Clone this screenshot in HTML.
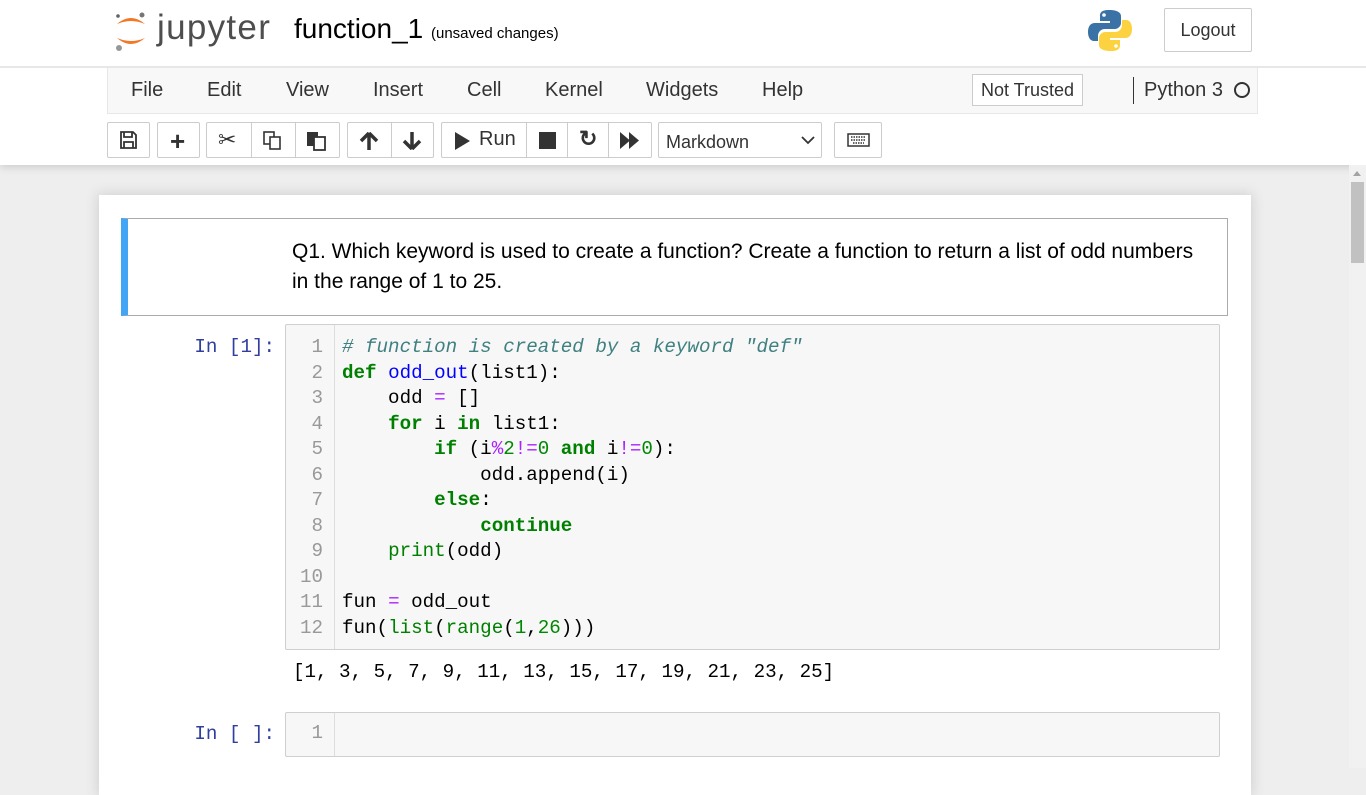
<!DOCTYPE html><html><head><style>
*{box-sizing:border-box;margin:0;padding:0}
body{width:1366px;height:768px;overflow:hidden;background:#eee;font-family:"Liberation Sans",sans-serif;position:relative}
.abs{position:absolute}
#hdr{left:0;top:0;width:1366px;height:165px;background:#fff;box-shadow:0 2px 8px rgba(0,0,0,.15);z-index:2}
.menu{left:107px;top:68px;width:1151px;height:46px;background:#f8f8f8;border:1px solid #e7e7e7;border-top:none}
.mi{position:absolute;top:11px;font-size:20px;color:#333}
.btn{position:absolute;top:122px;height:36px;border:1px solid #ccc;border-radius:2px;background:#fff}
.sep{position:absolute;top:0;width:1px;height:34px;background:#ccc}
.ic{position:absolute;top:8px;font-size:18px;color:#333}
.mono{font-family:"Liberation Mono",monospace;font-size:19.2px}
.ln{position:absolute;right:0;width:38px;text-align:right;color:#999}
.k{color:#008000;font-weight:bold}.o{color:#aa22ff}.n{color:#080}.c{color:#408080;font-style:italic}.f{color:#00f}.b{color:#008000}
</style></head><body>
<div id="hdr" class="abs">
 <svg class="abs" style="left:113px;top:10px" width="36" height="42" viewBox="0 0 36 42">
  <path d="M4 14 Q18 2 32 14 Q18 8 4 14Z" fill="#f37726"/>
  <path d="M4 28 Q18 40 32 28 Q18 34 4 28Z" fill="#f37726"/>
  <circle cx="29" cy="5" r="2.5" fill="#767677"/><circle cx="6" cy="38" r="3" fill="#989798"/><circle cx="5" cy="6" r="1.8" fill="#616262"/>
 </svg>
 <div class="abs" style="left:157px;top:8px;font-size:35px;color:#4e4e4e;letter-spacing:1.3px">jupyter</div>
 <div class="abs" style="left:294px;top:13px;font-size:28px;color:#000">function_1 <span style="font-size:15px">(unsaved changes)</span></div>
 <svg class="abs" style="left:1088px;top:9px" width="44" height="43" viewBox="0 0 44 43">
  <path d="M21 1c-9 0-9 4-9 6v5h10v2H7c-5 0-7 4-7 9s2 9 6 9h4v-5c0-4 3-7 7-7h10c3 0 6-3 6-6V7c0-3-3-6-12-6z" fill="#3a72a5"/>
  <path d="M23 42c9 0 9-4 9-6v-5H22v-2h15c5 0 7-4 7-9s-2-9-6-9h-4v5c0 4-3 7-7 7H17c-3 0-6 3-6 6v7c0 3 3 6 12 6z" fill="#fdd240"/>
  <circle cx="16" cy="6" r="1.8" fill="#fff"/><circle cx="28" cy="37" r="1.8" fill="#fff"/>
 </svg>
 <div class="abs" style="left:1164px;top:8px;width:88px;height:44px;border:1px solid #ccc;border-radius:2px;font-size:18px;color:#333;text-align:center;line-height:42px">Logout</div>
 <div class="abs" style="left:0;top:66px;width:1366px;height:2px;background:#e7e7e7"></div>
 <div class="abs menu">
  <span class="mi" style="left:23px">File</span><span class="mi" style="left:99px">Edit</span><span class="mi" style="left:178px">View</span><span class="mi" style="left:265px">Insert</span><span class="mi" style="left:359px">Cell</span><span class="mi" style="left:437px">Kernel</span><span class="mi" style="left:538px">Widgets</span><span class="mi" style="left:654px">Help</span>
  <div class="abs" style="left:864px;top:6px;width:111px;height:32px;border:1px solid #ccc;background:#fff;font-size:18px;color:#333;text-align:center;line-height:30px">Not Trusted</div>
  <div class="abs" style="left:1025px;top:9px;width:1px;height:27px;background:#333"></div>
  <span class="mi" style="left:1036px">Python 3</span>
  <div class="abs" style="left:1126px;top:14px;width:16px;height:16px;border:2.5px solid #333;border-radius:50%"></div>
 </div>
 <div class="btn" style="left:107px;width:43px"><svg class="abs" style="left:12px;top:8px" width="17" height="18" viewBox="0 0 17 18"><path d="M1 1h12l3 3v13H1z M4 1v5h8V1 M4 11h9v6H4z" fill="none" stroke="#333" stroke-width="1.8"/></svg></div>
 <div class="btn" style="left:157px;width:43px"><span class="ic" style="left:12px;top:3px;font-size:26px;font-weight:bold">+</span></div>
 <div class="btn" style="left:206px;width:134px"><span class="ic" style="left:11px;font-size:22px;top:4px">✂</span><div class="sep" style="left:44px"></div><svg class="abs" style="left:56px;top:8px" width="20" height="20"><rect x="1" y="1" width="10" height="12" fill="#fff" stroke="#333" stroke-width="1.6"/><rect x="7" y="6" width="10" height="12" fill="#fff" stroke="#333" stroke-width="1.6"/></svg><div class="sep" style="left:88px"></div><svg class="abs" style="left:99px;top:8px" width="20" height="20"><rect x="1" y="1" width="11" height="14" fill="#333"/><rect x="8" y="6" width="11" height="13" fill="#fff" stroke="#333" stroke-width="1.8"/></svg></div>
 <div class="btn" style="left:347px;width:87px"><svg class="abs" style="left:11px;top:9px" width="20" height="18"><path d="M10 1L2 9M10 1l8 8M10 2v16" stroke="#333" stroke-width="3.5" fill="none"/></svg><div class="sep" style="left:43px"></div><svg class="abs" style="left:54px;top:9px" width="20" height="18"><path d="M10 17L2 9M10 17l8-8M10 16V0" stroke="#333" stroke-width="3.5" fill="none"/></svg></div>
 <div class="btn" style="left:441px;width:211px"><svg class="abs" style="left:12px;top:9px" width="16" height="18"><path d="M1 0l15 9-15 9z" fill="#333"/></svg><span class="ic" style="left:37px;top:5px;font-size:20px">Run</span><div class="sep" style="left:84px"></div><div class="abs" style="left:97px;top:9px;width:17px;height:17px;background:#333"></div><div class="sep" style="left:125px"></div><span class="ic" style="left:137px;top:3px;font-size:22px;font-weight:bold">↻</span><div class="sep" style="left:166px"></div><svg class="abs" style="left:178px;top:9px" width="20" height="17"><path d="M0 0l10 8.5L0 17zM9 0l10 8.5L9 17z" fill="#333"/></svg></div>
 <div class="btn" style="left:658px;width:164px"><span class="ic" style="left:7px;top:9px;font-size:18px">Markdown</span><svg class="abs" style="left:142px;top:13px" width="14" height="10"><path d="M1 1l6 6 6-6" stroke="#333" stroke-width="1.8" fill="none"/></svg></div>
 <div class="btn" style="left:834px;width:48px"><svg class="abs" style="left:12px;top:10px" width="23" height="14"><rect x="1" y="1" width="21" height="12" fill="none" stroke="#333" stroke-width="1.5"/><path d="M4 4h15M4 7h15M6 10h11" stroke="#333" stroke-width="1.5" stroke-dasharray="1.5 1"/></svg></div>
</div>
<div class="abs" style="left:1349px;top:165px;width:17px;height:603px;background:#f1f1f1;z-index:3"></div>
<div class="abs" style="left:1353px;top:171px;width:0;height:0;border:4px solid transparent;border-bottom:5px solid #a3a3a3;border-top:none;z-index:4"></div>
<div class="abs" style="left:1351px;top:182px;width:13px;height:81px;background:#c1c1c1;z-index:4"></div>
<div class="abs" style="left:99px;top:195px;width:1152px;height:600px;background:#fff;box-shadow:0 0 12px 1px rgba(87,87,87,.2)"></div>
<div class="abs" style="left:121px;top:218px;width:1107px;height:98px;border:1px solid #ababab;border-left:7px solid #42a5f5;background:#fff"></div>
<div class="abs" style="left:292px;top:237px;width:920px;font-size:21px;line-height:30px;color:#000">Q1. Which keyword is used to create a function? Create a function to return a list of odd numbers in the range of 1 to 25.</div>
<div class="abs mono" style="left:150px;top:336px;width:125px;text-align:right;color:#303f9f">In&nbsp;[1]:</div>
<div class="abs" style="left:285px;top:324px;width:935px;height:326px;background:#f7f7f7;border:1px solid #cfcfcf;border-radius:2px"></div>
<div class="abs" style="left:334px;top:325px;width:1px;height:324px;background:#ddd"></div>
<div class="abs mono" style="left:285px;top:335px;width:48px;line-height:25.5px">
<div style="position:relative;height:306px"><div class="ln" style="right:10px">1<br>2<br>3<br>4<br>5<br>6<br>7<br>8<br>9<br>10<br>11<br>12</div></div></div>
<pre class="abs mono" style="left:342px;top:335px;line-height:25.5px;color:#000"><span class="c"># function is created by a keyword "def"</span>
<span class="k">def</span> <span class="f">odd_out</span>(list1):
    odd <span class="o">=</span> []
    <span class="k">for</span> i <span class="k">in</span> list1:
        <span class="k">if</span> (i<span class="o">%</span><span class="n">2</span><span class="o">!=</span><span class="n">0</span> <span class="k">and</span> i<span class="o">!=</span><span class="n">0</span>):
            odd.append(i)
        <span class="k">else</span>:
            <span class="k">continue</span>
    <span class="b">print</span>(odd)

fun <span class="o">=</span> odd_out
fun(<span class="b">list</span>(<span class="b">range</span>(<span class="n">1</span>,<span class="n">26</span>)))</pre>
<pre class="abs mono" style="left:293px;top:661px;color:#000">[1, 3, 5, 7, 9, 11, 13, 15, 17, 19, 21, 23, 25]</pre>
<div class="abs mono" style="left:150px;top:723px;width:125px;text-align:right;color:#303f9f">In&nbsp;[&nbsp;]:</div>
<div class="abs" style="left:285px;top:712px;width:935px;height:45px;background:#f7f7f7;border:1px solid #cfcfcf;border-radius:2px"></div>
<div class="abs" style="left:334px;top:713px;width:1px;height:43px;background:#ddd"></div>
<div class="abs mono" style="left:285px;top:722px;width:38px;text-align:right;color:#999">1</div>
</body></html>
